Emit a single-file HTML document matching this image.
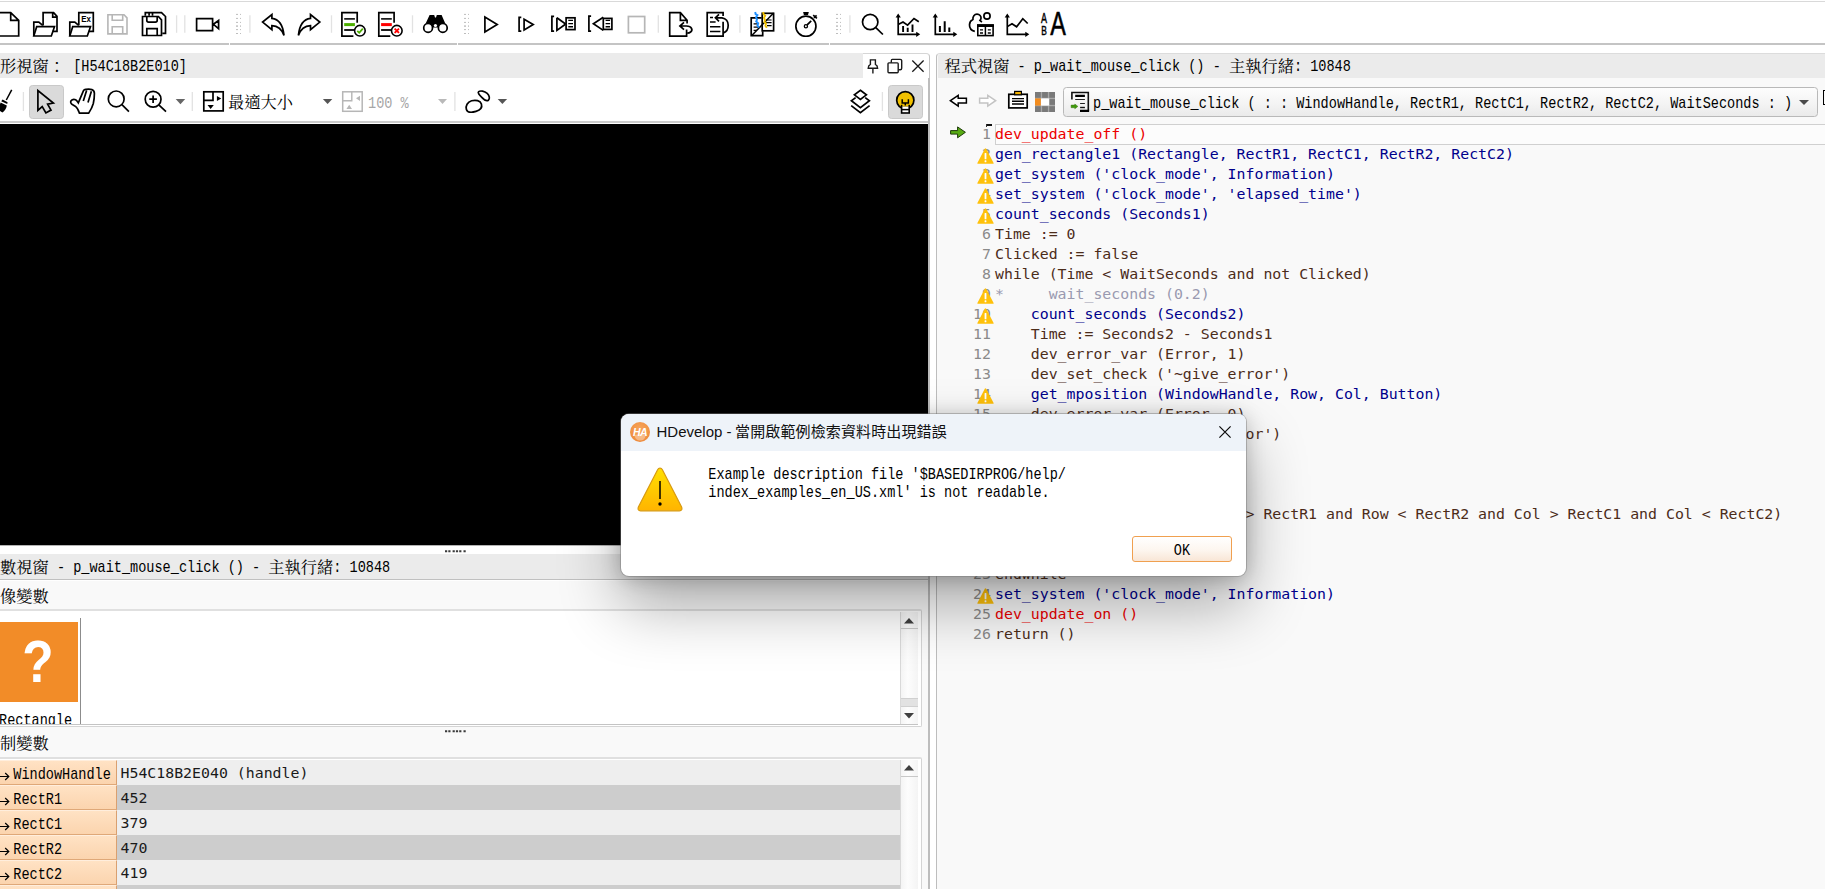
<!DOCTYPE html>
<html lang="zh-Hant">
<head>
<meta charset="utf-8">
<title>HDevelop</title>
<style>
html,body{margin:0;padding:0;}
html{width:1825px;height:889px;overflow:hidden;}
body{width:1825px;height:889px;overflow:hidden;background:#fff;position:relative;
  font-family:"Liberation Mono","Noto Serif CJK SC",monospace;color:#000;}
.abs{position:absolute;}
.ln{position:absolute;background:#c4c4c4;}
/* MingLiU-like mixed text: latin 8.13px cells, CJK 16.26px cells */
.ming{position:absolute;margin-top:-1px;white-space:pre;font-family:"Liberation Mono","Noto Serif CJK SC",monospace;font-size:13.55px;line-height:20px;color:#000;}
.ming i{display:inline-block;font-style:normal;transform:scaleY(1.24);transform-origin:0 13.6px;position:relative;top:-1px;}
.ming b{font-weight:normal;font-family:"Noto Serif CJK SC","Noto Sans CJK TC",serif;font-size:16.26px;line-height:20px;}
/* code */
.code{position:absolute;left:995px;white-space:pre;font-family:"DejaVu Sans Mono","Liberation Mono",monospace;font-size:14.87px;line-height:20px;height:20px;}
.num{position:absolute;width:60px;left:931px;text-align:right;white-space:pre;font-family:"DejaVu Sans Mono","Liberation Mono",monospace;font-size:14.87px;line-height:20px;height:20px;color:#8a8a8a;}
.r{color:#ec0000;} .bl{color:#00008b;} .k{color:#4c2c1a;} .g{color:#9a9ab0;}
.warn{position:absolute;left:977.4px;width:17px;height:16px;}
svg{position:absolute;overflow:visible;}
.ic{fill:none;stroke:#000;stroke-width:1.7;stroke-linejoin:miter;stroke-linecap:butt;}
</style>
</head>
<body>

<!-- ===== top chrome ===== -->
<div class="ln" style="left:0;top:1px;width:1825px;height:1px;background:#d9d9d9"></div>
<svg style="left:0;top:0" width="1100" height="46" viewBox="0 0 1100 46">
<defs>
<g id="sepv"><path d="M0 15.3V32.8" stroke="#e2e2e2" stroke-width="1.3"/></g>
<g id="grip" fill="#bdbdbd"><rect x="-1" y="13.9" width="2" height="1"/><rect x="-1" y="17.9" width="2" height="1"/><rect x="-1" y="21.9" width="2" height="1"/><rect x="-1" y="25.4" width="2" height="1.4"/><rect x="-1" y="29.1" width="2" height="1"/><rect x="-1" y="33" width="2" height="1"/><rect x="3" y="13.9" width="1" height="1"/><rect x="3" y="17.9" width="1" height="1"/><rect x="3" y="21.9" width="1" height="1"/><rect x="3" y="25.4" width="1" height="1.4"/><rect x="3" y="29.1" width="1" height="1"/><rect x="3" y="33" width="1" height="1"/></g>
<g id="folder" class="ic"><path d="M0.8 36V22.1H5.8L9.7 25.3"/><path d="M0.8 36 L3.7 26.7H21.5L18.3 36Z"/></g>
<g id="axes"><path d="M0 15.5V34.3H19" fill="none" stroke="#000" stroke-width="1.7"/><path d="M-2.6 17.6L0 13.6 2.6 17.6ZM18 31.7L22 34.3 18 36.9Z" fill="#000"/></g>
</defs>
<!-- new -->
<path class="ic" d="M-3 12.7H10.7L18.7 20.3V36H-3M10.7 12.7V20.3H18.7"/>
<!-- open -->
<g transform="translate(33,0)"><path class="ic" d="M10.1 25.5V12.7H20.6L24 16.4V31.4H19.5M19.7 12.7V17.2H24"/><use href="#folder"/></g>
<!-- open example -->
<g transform="translate(69,0)"><path class="ic" d="M9.8 25.2V12.7H24.3V31.4H19.7"/><use href="#folder"/><text x="12.3" y="22.4" font-family="Liberation Sans, sans-serif" font-weight="bold" font-size="9.6" textLength="9.6" lengthAdjust="spacingAndGlyphs" fill="#000">Ex</text></g>
<!-- save disabled -->
<path d="M107.9 14.7H124L127 17.9V33.9H107.9ZM112.2 14.7V20.3H122.7V14.7M112.2 33.9V26.7H122.7V33.9" fill="none" stroke="#b6b6b6" stroke-width="1.6"/>
<!-- save all -->
<path class="ic" d="M145.3 15.7V12.6H161.5L165.5 16.5V33.4H162.3M149.1 12.6V15.7M152.5 12.6V15.7"/>
<path class="ic" d="M142.5 16.5H158.4L161.5 19.8V35.5H142.5ZM146.8 16.5V20.3Q146.8 22.1 148.6 22.1H155.4Q157.2 22.1 157.2 20.3V16.5M146.8 35.5V28.6H157.2V35.5" fill="#fff"/>
<use href="#sepv" x="176.6"/><use href="#sepv" x="184.8"/>
<!-- camera -->
<path class="ic" d="M196.6 18.6H212.6V30.6H196.6ZM213.4 24.3L218.6 20.5V28.7Z" stroke-width="1.8"/>
<use href="#grip" x="237"/><use href="#sepv" x="249.9"/>
<!-- undo / redo -->
<path id="undo" class="ic" d="M284 35.4C283 25.5 278.5 19.2 271.9 18.4V14.6L262.6 22.1 271.9 29.6V25.6C277.5 25.8 281.6 28.6 284 35.4Z" stroke-linejoin="miter"/>
<use href="#undo" transform="translate(582.4,0) scale(-1,1)"/>
<use href="#sepv" x="331.5"/>
<!-- doc check / doc x -->
<g id="docl"><path class="ic" d="M357.2 22.7V12.7H341.9V36.1H353.4"/><path d="M344.2 18.9H354.9M344.2 30H354.6" stroke="#1e1e1e" stroke-width="1.9" fill="none"/><circle cx="359.9" cy="30.7" r="5.3" fill="#fff" stroke="#000" stroke-width="1.6"/></g>
<path d="M344.2 24.6H354.9" stroke="#4caf00" stroke-width="3" fill="none"/>
<path d="M357.3 30.9L359.2 32.8 362.8 28.6" stroke="#4caf00" stroke-width="1.8" fill="none"/>
<use href="#docl" x="36.9"/>
<path d="M381.1 24.6H391.8" stroke="#ff0000" stroke-width="3" fill="none"/>
<path d="M394.6 28.6L399 32.9M399 28.6L394.6 32.9" stroke="#ff0000" stroke-width="1.9" fill="none"/>
<use href="#sepv" x="412.5"/>
<!-- binoculars -->
<path d="M429.6 15H434.2L435 17.5H436L436.8 15H441.6L447 27.5H423.8Z" fill="#000"/>
<circle cx="428.1" cy="27.9" r="4.4" fill="#fff" stroke="#000" stroke-width="1.7"/><circle cx="442.8" cy="27.9" r="4.4" fill="#fff" stroke="#000" stroke-width="1.7"/><circle cx="435.45" cy="25.5" r="1.6" fill="#fff"/>
<use href="#grip" x="465" /><!-- grip 2 -->
<!-- play -->
<path class="ic" d="M484.9 16.9V31.9L497.2 24.4Z" stroke-width="1.7"/>
<!-- step -->
<path class="ic" d="M521.3 17.4H519.1V31.2H521.3M524.1 19.2V29.9L533.2 24.5Z"/>
<!-- step into -->
<path class="ic" d="M554.1 16.3H551.9V31.2H554.1M556.9 17.8V30.4L565.4 24.2"/><path class="ic" d="M556.9 17.8L565.6 24"/><rect class="ic" x="566.1" y="17.8" width="8.9" height="11.8"/><path d="M568.3 20.4H573M568.3 23.6H573M568.3 26.8H573" stroke="#000" stroke-width="1.4"/>
<!-- step out -->
<path class="ic" d="M591.1 16.1H588.9V31.2H591.1M603.3 17.3L593.4 23.8 603.3 30.4"/><rect class="ic" x="603.3" y="18.4" width="8.6" height="11"/><path d="M605.6 20.4H610.1M605.6 23.6H610.1M605.6 26.8H610.1" stroke="#000" stroke-width="1.4"/>
<!-- stop disabled -->
<rect x="628.4" y="16.5" width="16.3" height="16.3" fill="none" stroke="#b6b6b6" stroke-width="1.7"/>
<use href="#sepv" x="658.3"/>
<!-- doc + arrow -->
<path class="ic" d="M686.6 29.4V36.1H669.7V12.7H680.4L687.1 20.3V23.6M680.4 12.7V20.3H687.1"/>
<path class="ic" d="M684 22.4L679.9 26 684 29.7M680.2 26H686.5C692 26 693 30.2 690.6 32 689.6 32.8 688.4 33.1 687.2 33.2" stroke-width="1.6"/>
<!-- doc + return arrow -->
<path class="ic" d="M723.1 16V12.7H707.2V36.1H723.1V21.8"/><path d="M710 17.5H713M710 22.1H715.6M710 26.7H720.4M710 31.5H720.4" stroke="#000" stroke-width="1.5" fill="none"/>
<path class="ic" d="M719 14.4L715.4 17.8 719 21.4M715.6 17.8H722C726 18.3 728.2 21.6 728.2 25.3 728.2 29 726.2 32 723.4 32.9" stroke-width="1.5"/>
<use href="#sepv" x="739.9"/>
<!-- compare -->
<path class="ic" d="M761.6 17.9H751.2V35.6H762.7V31.2" stroke-width="1.6"/><rect class="ic" x="762.2" y="13.3" width="11.4" height="17.5" fill="#fff" stroke-width="1.6"/>
<path d="M773.6 13L751.6 35.8" stroke="#000" stroke-width="1.5"/>
<path d="M766 20H771.6M766 22.7H771.6M767 25.7H771.6M753.6 23.9H758M753.6 27.2H758M753.6 30.3H757" stroke="#000" stroke-width="1.2"/>
<path d="M755.2 12L755.6 14.2 757.4 15.2 756 17.4 757 19.6 756.2 21.4 758.2 23.2 757.4 25.6 759.2 27.6" stroke="#1e8fff" stroke-width="1.9" fill="none"/>
<path d="M763.2 12L763.6 14.2 765.2 15.6 764 17.8 765 20 764.4 22 766 23.6 765.4 25.8 766.8 27.8" stroke="#f0c000" stroke-width="1.9" fill="none"/>
<use href="#sepv" x="784.9"/>
<!-- stopwatch -->
<circle class="ic" cx="805.9" cy="26.2" r="10.05"/><path d="M803.1 12.1H808.8L808 15H803.9Z" fill="#000"/><path class="ic" d="M813.2 15.2L816.9 18.3M816.6 15.3L814 17.8M806.9 25.1L811.2 20.8" stroke-width="1.5"/><circle cx="805.9" cy="26.2" r="1.6" fill="#fff" stroke="#000" stroke-width="1.3"/>
<use href="#grip" x="837"/><use href="#sepv" x="849.9"/>
<!-- search -->
<circle class="ic" cx="870.2" cy="22" r="7.7"/><path class="ic" d="M875.8 27.6L882.9 34.5"/>
<!-- chart1 -->
<use href="#axes" x="898.2"/><path class="ic" d="M898.2 24.4L903 22 907.6 25.1 914 18.5 918.8 21.7" stroke-width="1.5"/><path d="M903.1 26V31.9M907.7 27.8V31.9M912.5 24.6V31.9" stroke="#000" stroke-width="1.9"/>
<!-- chart2 -->
<use href="#axes" x="935.3"/><path d="M939.9 26V31.9M944.7 21.2V31.9M949.3 27.6V31.9" stroke="#000" stroke-width="2"/>
<!-- tree + table -->
<path class="ic" d="M974.8 31.4C971.5 30.6 969.4 28 969.5 24.8 969.6 22.4 970.8 20.4 972.9 19.5 972.6 16.4 974.4 14.2 977 14.2 979.6 14.2 981.4 16.2 981 18.4 980.9 19.2 980.5 19.9 980 20.4L981.9 22.1" stroke-width="1.5"/>
<circle class="ic" cx="987" cy="16" r="3.1" stroke-width="1.5"/>
<rect x="977.8" y="25" width="15.3" height="10.6" fill="#fff" stroke="#000" stroke-width="1.6"/><rect x="977" y="24.4" width="16.9" height="2.6" fill="#000"/><path d="M985.4 26V35.6" stroke="#000" stroke-width="1.5"/><path d="M980 29.9H983M980 33H983M987.8 29.9H990.8M987.8 33H990.8" stroke="#000" stroke-width="1.3"/>
<!-- line chart -->
<use href="#axes" x="1007.3"/><path class="ic" d="M1007.3 26.6L1012 23.7 1016.6 26.8 1022.8 18.7 1027.7 23.5" stroke-width="1.5"/>
<!-- AB A -->
<text x="1041" y="22.6" font-family="Liberation Sans, sans-serif" font-size="14.2" textLength="6" lengthAdjust="spacingAndGlyphs" stroke="#000" stroke-width=".5">A</text>
<text x="1041.2" y="34.9" font-family="Liberation Sans, sans-serif" font-size="13.6" textLength="5.6" lengthAdjust="spacingAndGlyphs" stroke="#000" stroke-width=".5">B</text>
<text x="1050.2" y="35.3" font-family="Liberation Sans, sans-serif" font-size="32.6" textLength="15.6" lengthAdjust="spacingAndGlyphs" stroke="#000" stroke-width=".55">A</text>
</svg>
<div class="ln" style="left:0;top:43.2px;width:1825px;height:1.8px;background:#c4c4c4"></div>
<!-- toolbar line gaps -->
<div class="abs" style="left:229px;top:42px;width:1.2px;height:4px;background:#fff"></div>
<div class="abs" style="left:457.2px;top:42px;width:1.2px;height:4px;background:#fff"></div>
<div class="abs" style="left:829px;top:42px;width:1.2px;height:4px;background:#fff"></div>


<!-- ===== graphics window (left top) ===== -->
<div class="abs" style="left:0;top:53px;width:863px;height:25px;background:#ebebeb"></div>
<div class="ming" style="left:-16.2px;top:56px"><b>圖形視窗：</b><i> [H54C18B2E010]</i></div>
<div class="abs" style="left:863px;top:53px;width:67px;height:26px;box-sizing:border-box;background:#fff;border-top:1.3px solid #d6d6d6;border-right:1.5px solid #c4c4c4;border-radius:0 4px 0 0"></div>
<svg style="left:863px;top:53px" width="66" height="25" viewBox="863 53 66 25">
<path d="M870.4 59.9H875.4V64.4Q877.6 65.4 877.6 68.2H868.2Q868.2 65.4 870.4 64.4ZM872.9 68.4V73.4" fill="none" stroke="#1a1a1a" stroke-width="1.4"/>
<path d="M891.3 62.8V60.9Q891.3 59.4 892.3 59.4H900.2Q901.7 59.4 901.7 60.4V68.2Q901.7 69.7 900.2 69.7H898.4" fill="none" stroke="#1a1a1a" stroke-width="1.4"/>
<rect x="888" y="62.9" width="10.2" height="9.8" rx=".9" fill="none" stroke="#1a1a1a" stroke-width="1.4"/>
<path d="M912.3 60.5L923.6 71.8M923.6 60.5L912.3 71.8" stroke="#1a1a1a" stroke-width="1.3" fill="none"/>
</svg>

<div class="abs" style="left:29px;top:85px;width:35px;height:34px;box-sizing:border-box;background:#dadada;border:1px solid #c9c9c9;border-radius:3.5px"></div>
<div class="abs" style="left:888px;top:85px;width:35px;height:34px;box-sizing:border-box;background:#dadada;border:1px solid #c9c9c9;border-radius:3.5px"></div>
<svg style="left:0;top:80px" width="930" height="44" viewBox="0 80 930 44">
<defs><g id="sep2"><path d="M0 92V111" stroke="#e2e2e2" stroke-width="1.3"/></g></defs>
<!-- broom -->
<path d="M11.7 89.8L6.3 100" stroke="#000" stroke-width="1.5"/>
<path d="M2.6 99.6L7.6 102.2 7.2 104 1.2 101.2ZM0.6 102.6L6.8 105.4C6.6 108 4.6 111.2 2.4 112.4L-2 110Z" fill="#000"/>
<use href="#sep2" x="23.4"/>
<!-- pointer -->
<path class="ic" d="M37.9 90.6V110.4L42.2 106.6 45.9 112.9 51 110.1 47.6 104.2 53.4 103Z" stroke-width="1.7"/>
<!-- hand -->
<path class="ic" d="M79.4 113.1C78.4 110 77.4 107.8 75.5 106.4 73.8 105.2 72 104.6 71.2 103.5 70.3 102.3 70.6 100.6 71.9 99.9 73.2 99.3 74.6 99.3 75.6 99.8 76.6 100.4 77.5 101.6 78.3 102.9L83.5 90.6C84 89.6 85 89.3 86 89.4 88 89 90 89 91.9 89.6 93.6 90.2 94.4 91.6 94.4 93.5 94.4 97 94 100.4 93.3 103.5 92.4 107 90.6 110.2 88.7 113.1ZM86.6 90.6L83.3 101M91.4 91.2L88 102.4" stroke-width="1.7" stroke-linejoin="round"/>
<!-- zoom -->
<circle class="ic" cx="116.2" cy="98.9" r="7.9"/><path class="ic" d="M121.9 104.6L128.9 111.6"/>
<!-- zoom + -->
<circle class="ic" cx="153.1" cy="99.2" r="7.9"/><path class="ic" d="M158.8 104.9L166 111.7M149.3 99.2H156.9M153.1 95.4V103" stroke-width="1.6"/>
<path d="M175.7 99.1H185.2L180.45 104.2Z" fill="#666"/>
<use href="#sep2" x="192.3"/>
<!-- fit -->
<rect class="ic" x="203.8" y="91.8" width="19.4" height="19.1"/><path class="ic" d="M203.8 100.3H213V91.8" stroke-width="1.6"/><path d="M216.9 95.9L221.3 98.5 216.9 101.1ZM207.5 104.9H213.8L210.65 108.9Z" fill="#000"/>
<path d="M322.9 99H332.3L327.6 104.1Z" fill="#555"/>
<!-- disabled fit -->
<rect x="342.7" y="91.8" width="19.5" height="19.5" fill="none" stroke="#b6b6b6" stroke-width="1.5"/><path d="M342.7 100.7H351.8V91.8" fill="none" stroke="#b6b6b6" stroke-width="1.4"/><path d="M360 95.7V101L356 98.35ZM346.4 109H352L349.2 104.7Z" fill="#b6b6b6"/>
<path d="M438 99H447L442.5 104Z" fill="#b9b9b9"/>
<use href="#sep2" x="454.9"/>
<!-- blobs -->
<path class="ic" d="M466.4 109.4C465.4 106 467.4 102 471.6 100.8 475.6 99.6 480.4 100.6 481.4 104 482.4 107.4 480 110.2 476 111.4 471.8 112.6 467.4 112.8 466.4 109.4Z" stroke-width="1.6"/>
<path class="ic" d="M478.6 91.6C480.4 90.4 484.4 91 487.2 93.4 489.6 95.6 490 99 488.4 100.2 486.8 101.4 484 99.8 481.8 97.4 479.4 95 477.4 92.6 478.6 91.6Z" stroke-width="1.6"/>
<path d="M497.7 99H507.1L502.4 104.1Z" fill="#555"/>
<!-- layers -->
<path class="ic" d="M860.4 90.3L866.4 94.8 860.4 99.4 854.4 94.8Z" stroke-width="1.5"/><path class="ic" d="M855.6 97.6L851.4 100.8 860.4 107.6 869.4 100.8 865.2 97.6M851.2 105.6L860.4 112.6 869.6 105.6" stroke-width="1.5"/>
<use href="#sep2" x="882.4"/>
<!-- bulb -->
<circle cx="905.3" cy="100.2" r="8.6" fill="#f0c000" stroke="#000" stroke-width="1.7"/>
<rect x="901.6" y="105.6" width="7.6" height="7.4" fill="#fff" stroke="#000" stroke-width="1.6"/><path d="M901.6 109.6H909.2" stroke="#000" stroke-width="1.5"/>
<rect x="902.4" y="104.4" width="6" height="2" fill="#f0c000"/>
<path d="M902.2 99.2V103H908.4V99.2M905.3 103V105.6" fill="none" stroke="#000" stroke-width="1.5"/>
</svg>
<div class="ming" style="left:228px;top:91.5px"><b>最適大小</b></div>
<div class="ming" style="left:368px;top:97px;color:#a6a6a6"><i>100 %</i></div>
<div class="abs" style="left:514.5px;top:120px;width:1.2px;height:4px;background:#fff"></div>

<div class="ln" style="left:0;top:121px;width:929px;height:1.5px;background:#cbcbcb"></div>
<div class="abs" style="left:0;top:124px;width:928px;height:421px;background:#000"></div>
<div class="ln" style="left:0;top:545px;width:929px;height:2.6px;background:linear-gradient(#a8a8a8,#e8e8e8)"></div>

<!-- ===== variable window (left bottom) ===== -->
<!-- left panel bg below graphics -->
<div class="abs" style="left:0;top:546px;width:928px;height:8px;background:#fff"></div>
<svg style="left:445px;top:550px" width="22" height="3" viewBox="0 0 22 3"><path d="M0 1.2H2.2M3.3 1.2H5.5M7.6 1.2H9.8M10.9 1.2H13.1M14.2 1.2H16.4M18.5 1.2H20.7" stroke="#3a3a3a" stroke-width="2"/></svg>
<div class="abs" style="left:0;top:554px;width:928px;height:25px;background:#ebebeb"></div>
<div class="ming" style="left:-16.2px;top:557px"><b>變數視窗</b><i> - p_wait_mouse_click () - </i><b>主執行緒</b><i>: 10848</i></div>
<div class="ln" style="left:0;top:578.8px;width:928px;height:1.4px;background:#c0c0c0"></div>
<div class="abs" style="left:0;top:580.5px;width:928px;height:309px;background:#f9f9f9"></div>
<div class="ming" style="left:-16.2px;top:586px"><b>圖像變數</b></div>
<!-- iconic frame -->
<div class="abs" style="left:-4px;top:609.3px;width:925.5px;height:118.2px;box-sizing:border-box;border:1.5px solid #d4d4d4;border-top:2.4px solid #e0e0e0;border-radius:2px;background:#fff"></div>
<div class="ln" style="left:0;top:724px;width:918px;height:1.3px;background:#c4c4c4"></div>
<div class="abs" style="left:0;top:622px;width:78px;height:80px;background:#f28c28"></div>
<div class="abs" style="left:0;top:630px;width:76px;height:64px;line-height:64px;text-align:center;color:#fff;font:bold 59px/64px 'Liberation Sans',sans-serif;transform:scaleX(.87)">?</div>
<div class="ln" style="left:80px;top:618px;width:1.2px;height:106px;background:#8c8c8c"></div>
<div class="abs" style="left:0;top:704px;width:80px;height:20px;overflow:hidden"><div class="ming" style="left:-1px;top:9.5px"><i>Rectangle</i></div></div>
<!-- iconic scrollbar -->
<div class="abs" style="left:900px;top:612px;width:18px;height:112px;background:linear-gradient(90deg,#f4f4f4,#fdfdfd 40%,#f4f4f4);border-left:1px solid #d9d9d9;box-sizing:border-box"></div>
<svg style="left:904px;top:618px" width="10" height="6" viewBox="0 0 10 6"><path d="M5 0L10 5.6H0Z" fill="#404040"/></svg>
<div class="ln" style="left:901px;top:628px;width:17px;height:1.3px;background:#c8c8c8"></div>
<div class="abs" style="left:901px;top:697.5px;width:17px;height:9px;background:#e2e2e2;border-top:1px solid #d0d0d0;border-bottom:1px solid #d0d0d0;box-sizing:border-box"></div>
<svg style="left:904px;top:712.5px" width="10" height="6" viewBox="0 0 10 6"><path d="M0 0H10L5 5.6Z" fill="#404040"/></svg>
<svg style="left:445px;top:730px" width="22" height="3" viewBox="0 0 22 3"><path d="M0 1.2H2.2M3.3 1.2H5.5M7.6 1.2H9.8M10.9 1.2H13.1M14.2 1.2H16.4M18.5 1.2H20.7" stroke="#3a3a3a" stroke-width="2"/></svg>
<div class="ming" style="left:-16.2px;top:733px"><b>控制變數</b></div>
<!-- control frame -->
<div class="abs" style="left:-4px;top:757px;width:925.5px;height:140px;box-sizing:border-box;border:1.5px solid #d4d4d4;border-top:2.4px solid #e0e0e0;border-radius:2px;background:#fff"></div>
<div class="abs" style="left:900px;top:759.5px;width:18px;height:130px;background:linear-gradient(90deg,#f4f4f4,#fdfdfd 40%,#f4f4f4);border-left:1px solid #d9d9d9;box-sizing:border-box"></div>
<svg style="left:904px;top:765px" width="10" height="6" viewBox="0 0 10 6"><path d="M5 0L10 5.6H0Z" fill="#404040"/></svg>
<div class="ln" style="left:901px;top:775.7px;width:17px;height:1.3px;background:#c8c8c8"></div>
<div class="abs" style="left:117px;top:759.5px;width:783px;height:25px;background:#eeeeee"></div>
<div class="abs" style="left:0;top:759.5px;width:117px;height:25px;box-sizing:border-box;background:linear-gradient(#ffe2c4,#fbd4ae);border-right:1.5px solid #d9a070;border-bottom:1.5px solid #dfa878;border-top:1px solid #ffeedd"></div>
<svg style="left:0;top:771.5px" width="10" height="9" viewBox="0 0 10 9"><path d="M0 4.5H8.6M5.2 1L8.8 4.5 5.2 8" fill="none" stroke="#000" stroke-width="1.2"/></svg>
<div class="ming" style="left:13.3px;top:768.0px"><i>WindowHandle</i></div>
<div class="code" style="left:120.5px;top:762.5px;color:#1a1a1a">H54C18B2E040 (handle)</div>
<div class="abs" style="left:117px;top:784.5px;width:783px;height:25px;background:#cdcdcd"></div>
<div class="abs" style="left:0;top:784.5px;width:117px;height:25px;box-sizing:border-box;background:linear-gradient(#ffe2c4,#fbd4ae);border-right:1.5px solid #d9a070;border-bottom:1.5px solid #dfa878;border-top:1px solid #ffeedd"></div>
<svg style="left:0;top:796.5px" width="10" height="9" viewBox="0 0 10 9"><path d="M0 4.5H8.6M5.2 1L8.8 4.5 5.2 8" fill="none" stroke="#000" stroke-width="1.2"/></svg>
<div class="ming" style="left:13.3px;top:793.0px"><i>RectR1</i></div>
<div class="code" style="left:120.5px;top:787.5px;color:#1a1a1a">452</div>
<div class="abs" style="left:117px;top:809.5px;width:783px;height:25px;background:#eeeeee"></div>
<div class="abs" style="left:0;top:809.5px;width:117px;height:25px;box-sizing:border-box;background:linear-gradient(#ffe2c4,#fbd4ae);border-right:1.5px solid #d9a070;border-bottom:1.5px solid #dfa878;border-top:1px solid #ffeedd"></div>
<svg style="left:0;top:821.5px" width="10" height="9" viewBox="0 0 10 9"><path d="M0 4.5H8.6M5.2 1L8.8 4.5 5.2 8" fill="none" stroke="#000" stroke-width="1.2"/></svg>
<div class="ming" style="left:13.3px;top:818.0px"><i>RectC1</i></div>
<div class="code" style="left:120.5px;top:812.5px;color:#1a1a1a">379</div>
<div class="abs" style="left:117px;top:834.5px;width:783px;height:25px;background:#cdcdcd"></div>
<div class="abs" style="left:0;top:834.5px;width:117px;height:25px;box-sizing:border-box;background:linear-gradient(#ffe2c4,#fbd4ae);border-right:1.5px solid #d9a070;border-bottom:1.5px solid #dfa878;border-top:1px solid #ffeedd"></div>
<svg style="left:0;top:846.5px" width="10" height="9" viewBox="0 0 10 9"><path d="M0 4.5H8.6M5.2 1L8.8 4.5 5.2 8" fill="none" stroke="#000" stroke-width="1.2"/></svg>
<div class="ming" style="left:13.3px;top:843.0px"><i>RectR2</i></div>
<div class="code" style="left:120.5px;top:837.5px;color:#1a1a1a">470</div>
<div class="abs" style="left:117px;top:859.5px;width:783px;height:25px;background:#eeeeee"></div>
<div class="abs" style="left:0;top:859.5px;width:117px;height:25px;box-sizing:border-box;background:linear-gradient(#ffe2c4,#fbd4ae);border-right:1.5px solid #d9a070;border-bottom:1.5px solid #dfa878;border-top:1px solid #ffeedd"></div>
<svg style="left:0;top:871.5px" width="10" height="9" viewBox="0 0 10 9"><path d="M0 4.5H8.6M5.2 1L8.8 4.5 5.2 8" fill="none" stroke="#000" stroke-width="1.2"/></svg>
<div class="ming" style="left:13.3px;top:868.0px"><i>RectC2</i></div>
<div class="code" style="left:120.5px;top:862.5px;color:#1a1a1a">419</div>
<div class="abs" style="left:117px;top:884.5px;width:783px;height:25px;background:#cdcdcd"></div>
<div class="abs" style="left:0;top:884.5px;width:117px;height:25px;box-sizing:border-box;background:linear-gradient(#ffe2c4,#fbd4ae);border-right:1.5px solid #d9a070;border-bottom:1.5px solid #dfa878;border-top:1px solid #ffeedd"></div>
<svg style="left:0;top:896.5px" width="10" height="9" viewBox="0 0 10 9"><path d="M0 4.5H8.6M5.2 1L8.8 4.5 5.2 8" fill="none" stroke="#000" stroke-width="1.2"/></svg>
<div class="ming" style="left:13.3px;top:893.0px"><i>WaitSeconds</i></div>
<div class="code" style="left:120.5px;top:887.5px;color:#1a1a1a">10</div>

<!-- ===== program window (right) ===== -->
<!-- panel borders between left and right -->
<div class="ln" style="left:928px;top:78px;width:2px;height:811px;background:#bdbdbd"></div>
<div class="abs" style="left:936px;top:53px;width:900px;height:840px;background:#f9f9f9;border:1.5px solid #bdbdbd;border-top:1px solid #dcdcdc;border-radius:4px 0 0 0;box-sizing:border-box"></div>
<div class="abs" style="left:938px;top:54px;width:887px;height:24px;background:#ebebeb;border-radius:3px 0 0 0"></div>
<div class="ming" style="left:944.4px;top:56px"><b>程式視窗</b><i> - p_wait_mouse_click () - </i><b>主執行緒</b><i>: 10848</i></div>
<!-- prog toolbar -->
<svg style="left:949px;top:94px" width="19" height="14" viewBox="0 0 19 14"><path d="M1.4 6.7 L9.2 1.4 V4.3 H17.4 V9.1 H9.2 V12 Z" fill="#fff" stroke="#000" stroke-width="1.5" stroke-linejoin="miter"/></svg>
<svg style="left:978px;top:94px" width="19" height="14" viewBox="0 0 19 14"><path d="M17.6 6.7 L9.8 1.4 V4.3 H1.6 V9.1 H9.8 V12 Z" fill="#fff" stroke="#c4c4c4" stroke-width="1.5" stroke-linejoin="miter"/></svg>
<svg style="left:1007px;top:90px" width="22" height="20" viewBox="0 0 22 20"><rect x="1.8" y="4.3" width="18.4" height="13.6" fill="#fff" stroke="#000" stroke-width="1.7"/><rect x="7.6" y="1.4" width="6.8" height="3.4" fill="#f0b000" stroke="#000" stroke-width="1.2"/><path d="M5 8.6H17M5 11.3H17M5 14H17" stroke="#000" stroke-width="1.4"/></svg>
<svg style="left:1035.2px;top:92px" width="20" height="20" viewBox="0 0 20 20"><rect width="20" height="20" fill="#a9a9a9"/><g fill="#7a7a7a"><rect x="0" y="0" width="5.8" height="5.8"/><rect x="7.1" y="0" width="5.8" height="5.8"/><rect x="14.2" y="0" width="5.8" height="5.8"/><rect x="14.2" y="7.1" width="5.8" height="5.8"/><rect x="0" y="14.2" width="5.8" height="5.8"/><rect x="7.1" y="14.2" width="5.8" height="5.8"/><rect x="14.2" y="14.2" width="5.8" height="5.8"/></g><rect x="5.8" y="6.4" width="8.4" height="7.2" fill="#fff"/><rect x="0" y="6.4" width="5.8" height="7.2" fill="#f28c1e"/></svg>
<!-- combobox -->
<div class="abs" style="left:1063px;top:87.3px;width:755px;height:29.4px;box-sizing:border-box;border:1.3px solid #b9b9b9;border-radius:3.5px;background:linear-gradient(#fdfdfd,#f4f4f4 55%,#eaeaea)"></div>
<svg style="left:1070px;top:91px" width="20" height="22" viewBox="1070 91 20 22"><path d="M1071.9 99.6V92.5H1088.3V111" fill="none" stroke="#111" stroke-width="1.6"/><path d="M1075.2 95.9H1084.9M1080 110.9H1089.1" stroke="#000" stroke-width="2.1"/><path d="M1075.2 99.5H1084.9M1080.1 103.5H1084.9" stroke="#222" stroke-width="1"/><path d="M1080.1 107.5H1084.9" stroke="#111" stroke-width="1.4"/><path d="M1071.1 105.1H1074.8V104L1077.9 106.4 1074.8 108.8V107.7H1071.1Z" fill="#3f9a0a" stroke="#3f7a1a" stroke-width=".5"/></svg>
<div class="ming" style="left:1093px;top:96.5px"><i>p_wait_mouse_click ( : : WindowHandle, RectR1, RectC1, RectR2, RectC2, WaitSeconds : )</i></div>
<svg style="left:1798.5px;top:99.5px" width="10" height="5" viewBox="0 0 10 5"><path d="M0 0H10L5 5Z" fill="#4a4a4a"/></svg>
<div class="abs" style="left:1822.5px;top:90px;width:4px;height:15px;box-sizing:border-box;border:1.6px solid #000;border-right:none"></div>
<!-- current line box -->
<div class="abs" style="left:994.7px;top:123.9px;width:840px;height:21px;box-sizing:border-box;border:1.2px solid #d0d0d0;border-bottom-width:1.8px;background:#fcfcfc"></div>
<div class="abs" style="left:985.7px;top:124.3px;width:6.2px;height:2px;background:#111"></div><div class="abs" style="left:985.7px;top:124.3px;width:1.2px;height:3px;background:#333"></div>
<!-- green PC arrow -->
<svg style="left:949.5px;top:125.5px" width="16" height="13" viewBox="0 0 16 13"><path d="M0.6 4.6H7.6V0.9L15.4 6.3 7.6 11.8V8.1H0.6Z" fill="#58ab14" stroke="#1d3a08" stroke-width="1"/></svg>
<svg width="0" height="0" style="left:0;top:0"><defs><g id="wtri"><path d="M8.5 0.2 Q8.9 0.2 9.2 0.8 L16.6 14.9 Q16.9 15.8 16 15.8 H1 Q0.1 15.8 0.4 14.9 L7.8 0.8 Q8.1 0.2 8.5 0.2Z" fill="#ffc10a"/><rect x="7.6" y="5" width="1.8" height="6.2" rx=".5" fill="#fff"/><rect x="7.6" y="12.3" width="1.8" height="1.9" rx=".5" fill="#fff"/></g></defs></svg>
<div class="num" style="top:123.7px">1</div>
<div class="code r" style="top:123.7px">dev_update_off ()</div>
<div class="num" style="top:143.7px">2</div>
<svg class="warn" style="top:148.1px" viewBox="0 0 17 16"><use href="#wtri"/></svg>
<div class="code bl" style="top:143.7px">gen_rectangle1 (Rectangle, RectR1, RectC1, RectR2, RectC2)</div>
<div class="num" style="top:163.7px">3</div>
<svg class="warn" style="top:168.1px" viewBox="0 0 17 16"><use href="#wtri"/></svg>
<div class="code bl" style="top:163.7px">get_system ('clock_mode', Information)</div>
<div class="num" style="top:183.7px">4</div>
<svg class="warn" style="top:188.1px" viewBox="0 0 17 16"><use href="#wtri"/></svg>
<div class="code bl" style="top:183.7px">set_system ('clock_mode', 'elapsed_time')</div>
<div class="num" style="top:203.7px">5</div>
<svg class="warn" style="top:208.1px" viewBox="0 0 17 16"><use href="#wtri"/></svg>
<div class="code bl" style="top:203.7px">count_seconds (Seconds1)</div>
<div class="num" style="top:223.7px">6</div>
<div class="code k" style="top:223.7px">Time := 0</div>
<div class="num" style="top:243.7px">7</div>
<div class="code k" style="top:243.7px">Clicked := false</div>
<div class="num" style="top:263.7px">8</div>
<div class="code k" style="top:263.7px">while (Time &lt; WaitSeconds and not Clicked)</div>
<div class="num" style="top:283.7px">9</div>
<svg class="warn" style="top:288.09999999999997px" viewBox="0 0 17 16"><use href="#wtri"/></svg>
<div class="code g" style="top:283.7px">*     wait_seconds (0.2)</div>
<div class="num" style="top:303.7px">10</div>
<svg class="warn" style="top:308.09999999999997px" viewBox="0 0 17 16"><use href="#wtri"/></svg>
<div class="code bl" style="top:303.7px">    count_seconds (Seconds2)</div>
<div class="num" style="top:323.7px">11</div>
<div class="code k" style="top:323.7px">    Time := Seconds2 - Seconds1</div>
<div class="num" style="top:343.7px">12</div>
<div class="code k" style="top:343.7px">    dev_error_var (Error, 1)</div>
<div class="num" style="top:363.7px">13</div>
<div class="code k" style="top:363.7px">    dev_set_check ('~give_error')</div>
<div class="num" style="top:383.7px">14</div>
<svg class="warn" style="top:388.09999999999997px" viewBox="0 0 17 16"><use href="#wtri"/></svg>
<div class="code bl" style="top:383.7px">    get_mposition (WindowHandle, Row, Col, Button)</div>
<div class="num" style="top:403.7px">15</div>
<div class="code k" style="top:403.7px">    dev_error_var (Error, 0)</div>
<div class="num" style="top:423.7px">16</div>
<div class="code k" style="top:423.7px">    dev_set_check ('give_error')</div>
<div class="num" style="top:443.7px">17</div>
<div class="code k" style="top:443.7px">    if (Error == 2)</div>
<div class="num" style="top:463.7px">18</div>
<div class="code k" style="top:463.7px">        Button := 0</div>
<div class="num" style="top:483.7px">19</div>
<div class="code k" style="top:483.7px">    endif</div>
<div class="num" style="top:503.7px">20</div>
<div class="code k" style="top:503.7px">    if (Button == 1 and Row &gt; RectR1 and Row &lt; RectR2 and Col &gt; RectC1 and Col &lt; RectC2)</div>
<div class="num" style="top:523.7px">21</div>
<div class="code k" style="top:523.7px">        Clicked := true</div>
<div class="num" style="top:543.7px">22</div>
<div class="code k" style="top:543.7px">    endif</div>
<div class="num" style="top:563.7px">23</div>
<div class="code k" style="top:563.7px">endwhile</div>
<div class="num" style="top:583.7px">24</div>
<svg class="warn" style="top:588.1px" viewBox="0 0 17 16"><use href="#wtri"/></svg>
<div class="code bl" style="top:583.7px">set_system ('clock_mode', Information)</div>
<div class="num" style="top:603.7px">25</div>
<div class="code r" style="top:603.7px">dev_update_on ()</div>
<div class="num" style="top:623.7px">26</div>
<div class="code k" style="top:623.7px">return ()</div>

<!-- ===== dialog ===== -->
<div class="abs" style="left:621px;top:414px;width:625px;height:162px;border-radius:8px;background:#fff;box-shadow:0 0 0 1px rgba(120,120,120,.45),0 30px 62px rgba(0,0,0,.32),0 2px 20px rgba(0,0,0,.22);overflow:hidden">
  <div class="abs" style="left:0;top:0;width:625px;height:36.6px;background:#eef3f9"></div>
  <svg style="left:9px;top:8px" width="20" height="20" viewBox="0 0 20 20"><defs><radialGradient id="hag" cx="50%" cy="35%" r="65%"><stop offset="0" stop-color="#f7a65c"/><stop offset="1" stop-color="#ee8a3a"/></radialGradient></defs><circle cx="10" cy="10" r="10" fill="url(#hag)"/><path d="M4.4 13.2Q10 11 15.8 13.4Q14.6 18.6 10 18.6Q5.6 18.6 4.4 13.2Z" fill="#fff" fill-opacity=".36"/><text x="10" y="14" text-anchor="middle" font-family="Liberation Sans, sans-serif" font-size="10.5" font-weight="bold" font-style="italic" fill="#fff" letter-spacing="-0.6">HA</text></svg>
  <div class="abs" style="left:35.5px;top:6.6px;white-space:pre;font:15px/22px 'Liberation Sans','Noto Sans CJK TC',sans-serif;color:#111">HDevelop - <span style="margin-left:-0.6px;letter-spacing:.12px">當開啟範例檢索資料時出現錯誤</span></div>
  <svg style="left:598px;top:11.8px" width="12" height="12" viewBox="0 0 12 12"><path d="M0.4 0.4L11.6 11.6M11.6 0.4L0.4 11.6" stroke="#111" stroke-width="1.25" fill="none"/></svg>
  <!-- warning icon -->
  <svg style="left:16px;top:52px" width="46" height="46" viewBox="0 0 46 46"><defs><linearGradient id="wg" x1="0" y1="0" x2="0" y2="1"><stop offset="0" stop-color="#ffe000"/><stop offset="1" stop-color="#ffb400"/></linearGradient></defs><path d="M23 2.2 Q24.6 2.2 25.4 3.8 L44.6 41 Q45.8 44.6 42.4 44.8 H3.6 Q0.2 44.6 1.4 41 L20.6 3.8 Q21.4 2.2 23 2.2Z" fill="url(#wg)" stroke="#d89a10" stroke-width="1.2"/><path d="M23 15V33" stroke="#000" stroke-width="1.5"/><circle cx="23" cy="38" r="1.7" fill="#000"/></svg>
  <div class="ming" style="left:87.3px;top:54.2px"><i>Example description file '$BASEDIRPROG/help/</i></div>
  <div class="ming" style="left:87.3px;top:72.2px"><i>index_examples_en_US.xml' is not readable.</i></div>
  <div class="abs" style="left:511px;top:122px;width:100px;height:26px;box-sizing:border-box;border:1.3px solid #f0a050;border-radius:3px;background:linear-gradient(#ffffff,#fdf6ef 55%,#f8e6d6)"></div>
  <div class="ming" style="left:511px;top:130px;width:100px;text-align:center"><i>OK</i></div>
</div>


</body>
</html>
